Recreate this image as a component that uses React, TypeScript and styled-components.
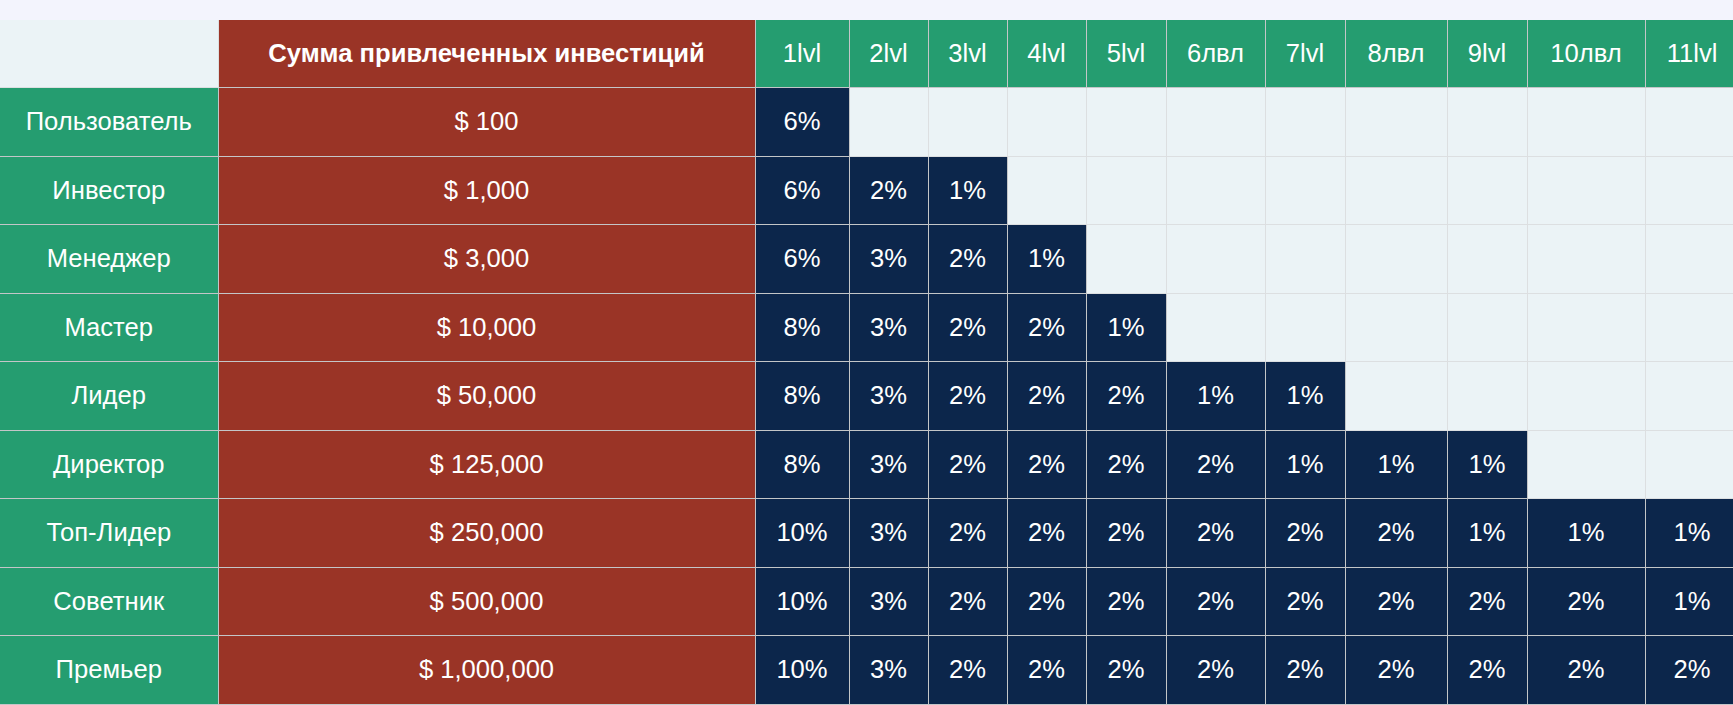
import React from "react";
import styled, { createGlobalStyle } from "styled-components";

const GlobalStyle = createGlobalStyle`
  html, body {
    margin: 0;
    padding: 0;
    background: #f3f4fd;
    overflow: hidden;
  }
  body {
    font-family: "Liberation Sans", Arial, sans-serif;
  }
`;

const Page = styled.div`
  width: 1733px;
  height: 705px;
  padding-top: 19.5px;
  box-sizing: border-box;
  overflow: hidden;
  background: #f3f4fd;
`;

const Table = styled.table`
  border-collapse: collapse;
  table-layout: fixed;
  width: 1739px;
  font-family: "Liberation Sans", Arial, sans-serif;
  font-size: 25.6px;
  color: #ffffff;
`;

type Tone = "blank" | "green" | "red" | "navy" | "empty";

const bg: Record<Tone, string> = {
  blank: "#ebf3f6",
  green: "#259d70",
  red: "#9a3426",
  navy: "#0c264b",
  empty: "#ebf3f6",
};

const Cell = styled.td<{ $tone: Tone; $bold?: boolean }>`
  height: 67.5px;
  padding: 0;
  text-align: center;
  vertical-align: middle;
  white-space: nowrap;
  background: ${(p) => bg[p.$tone]};
  font-weight: ${(p) => (p.$bold ? 700 : 400)};
  border: 1px solid ${(p) => (p.$tone === "empty" || p.$tone === "blank" ? "#dcdfe1" : "#c4c6c8")};
  &:first-child {
    border-left: none;
  }
`;

const HeadCell = styled(Cell).attrs({ as: "th" })`
  border-top: none;
`;

const widths = [218, 537, 94, 79, 79, 79, 80, 99, 80, 102, 80, 118, 94];

const levels = ["1lvl", "2lvl", "3lvl", "4lvl", "5lvl", "6лвл", "7lvl", "8лвл", "9lvl", "10лвл", "11lvl"];

const rows: { name: string; sum: string; pct: number[] }[] = [
  { name: "Пользователь", sum: "$ 100", pct: [6] },
  { name: "Инвестор", sum: "$ 1,000", pct: [6, 2, 1] },
  { name: "Менеджер", sum: "$ 3,000", pct: [6, 3, 2, 1] },
  { name: "Мастер", sum: "$ 10,000", pct: [8, 3, 2, 2, 1] },
  { name: "Лидер", sum: "$ 50,000", pct: [8, 3, 2, 2, 2, 1, 1] },
  { name: "Директор", sum: "$ 125,000", pct: [8, 3, 2, 2, 2, 2, 1, 1, 1] },
  { name: "Топ-Лидер", sum: "$ 250,000", pct: [10, 3, 2, 2, 2, 2, 2, 2, 1, 1, 1] },
  { name: "Советник", sum: "$ 500,000", pct: [10, 3, 2, 2, 2, 2, 2, 2, 2, 2, 1] },
  { name: "Премьер", sum: "$ 1,000,000", pct: [10, 3, 2, 2, 2, 2, 2, 2, 2, 2, 2] },
];

export default function App() {
  return (
    <>
      <GlobalStyle />
      <Page>
        <Table>
          <colgroup>
            {widths.map((w, i) => (
              <col key={i} style={{ width: w }} />
            ))}
          </colgroup>
          <thead>
            <tr>
              <HeadCell $tone="blank" />
              <HeadCell $tone="red" $bold>
                Сумма привлеченных инвестиций
              </HeadCell>
              {levels.map((l) => (
                <HeadCell key={l} $tone="green">
                  {l}
                </HeadCell>
              ))}
            </tr>
          </thead>
          <tbody>
            {rows.map((r) => (
              <tr key={r.name}>
                <Cell $tone="green">{r.name}</Cell>
                <Cell $tone="red">{r.sum}</Cell>
                {levels.map((l, i) =>
                  i < r.pct.length ? (
                    <Cell key={l} $tone="navy">
                      {r.pct[i]}%
                    </Cell>
                  ) : (
                    <Cell key={l} $tone="empty" />
                  )
                )}
              </tr>
            ))}
          </tbody>
        </Table>
      </Page>
    </>
  );
}
